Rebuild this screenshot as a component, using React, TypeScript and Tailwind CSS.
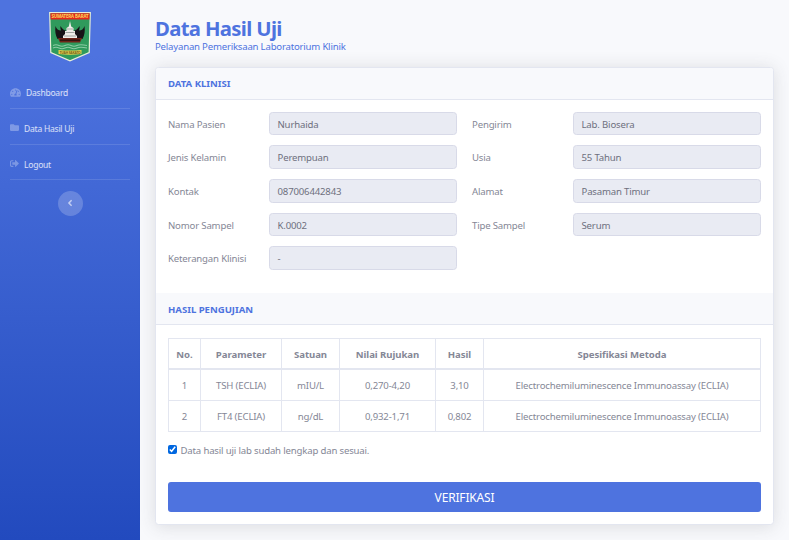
import type { ReactNode } from "react";
import { FaAngleLeft, FaFolder, FaSignOutAlt, FaTachometerAlt } from "react-icons/fa";

function Crest() {
  return (
    <svg className="overflow-visible" width="42" height="50" viewBox="0 0 42 50">
      <path d="M.7 .7H41.3L40.2 40.5L21 48.8L1.8 40.5Z" fill="#2f9a5c" stroke="#e9efd9" strokeWidth="1.2" />
      <path d="M1.4 1.3H40.6L40.4 7.5H1.6Z" fill="#e5251c" />
      <text x="21" y="6.3" textAnchor="middle" textLength="37" lengthAdjust="spacingAndGlyphs" fontSize="5" fontWeight="700" fill="#f7d95c">SUMATERA BARAT</text>
      <path d="M6.5 14Q8 18.5 12 18.5Q11 16 11.5 14Q14 18.5 18 19H24Q28 18.5 30.5 14Q31 16 30 18.5Q34 18.5 35.5 14Q36.5 22 33.5 27H8.5Q5.5 22 6.5 14Z" fill="#171317" />
      <path d="M21 9L22.2 14.5L24.5 16V19H26V22L28 24V26H14V24L16 22V19H17.5V16L19.8 14.5Z" fill="#f0eeea" />
      <path d="M18 17H24M16.5 20.5H25.5M15 24H27" stroke="#8f9290" strokeWidth=".8" />
      <path d="M9 26H33L31 30.5H11Z" fill="#6e2419" />
      <path d="M11 28.2H31" stroke="#291411" strokeWidth="1.3" />
      <path d="M4 33.5Q7 32 10 33.5T16 33.5T22 33.5T28 33.5T38 33.5M4 36Q7 34.5 10 36T16 36T22 36T28 36T38 36" fill="none" stroke="#8bcaa3" strokeWidth="1.2" />
      <path d="M9.5 38Q21 39 32.5 38V42Q21 43.5 9.5 42Z" fill="#ead04a" />
      <text x="21" y="42" textAnchor="middle" textLength="21" lengthAdjust="spacingAndGlyphs" fontSize="3.8" fontWeight="700" fill="#6d5e1f">TUAH SAKATO</text>
    </svg>
  );
}

function NavItem({ icon, children }: { icon: ReactNode; children: ReactNode }) {
  return (
    <div className="mx-[10px] flex h-[35.8px] items-center border-b border-white/12 pt-[5px] text-[8.5px] tracking-[-0.22px] text-white/80">
      <span className="-mt-[1.5px] text-white/30">{icon}</span>
      {children}
    </div>
  );
}

function Field({ label, value }: { label: string; value: string }) {
  return (
    <div className="flex h-[23.6px] items-center">
      <span className="w-[101px] pt-[1.5px] whitespace-nowrap text-[#858796]">{label}</span>
      <span className="flex h-[23.6px] w-[188px] items-center rounded-[3.5px] border border-[#d8dae8] bg-[#e9ebf3] px-[7.5px] pt-[1.5px] text-[#6e707e]">
        {value}
      </span>
    </div>
  );
}

function SectionHeader({ children }: { children: ReactNode }) {
  return (
    <h2 className="flex h-[32px] items-center border-b border-[#e3e6f0] bg-[#f8f9fc] px-[12px] pt-[1.5px] font-bold tracking-[-0.03px] text-[#4e73df]">
      {children}
    </h2>
  );
}

const left = [
  ["Nama Pasien", "Nurhaida"],
  ["Jenis Kelamin", "Perempuan"],
  ["Kontak", "087006442843"],
  ["Nomor Sampel", "K.0002"],
  ["Keterangan Klinisi", "-"],
];
const right = [
  ["Pengirim", "Lab. Biosera"],
  ["Usia", "55 Tahun"],
  ["Alamat", "Pasaman Timur"],
  ["Tipe Sampel", "Serum"],
];
const rows = [
  ["1", "TSH (ECLIA)", "mIU/L", "0,270-4,20", "3,10", "Electrochemiluminescence Immunoassay (ECLIA)"],
  ["2", "FT4 (ECLIA)", "ng/dL", "0,932-1,71", "0,802", "Electrochemiluminescence Immunoassay (ECLIA)"],
];
const heads = ["No.", "Parameter", "Satuan", "Nilai Rujukan", "Hasil", "Spesifikasi Metoda"];

export default function App() {
  return (
    <div className="flex h-[540px] w-[789px] overflow-hidden bg-[#f8f9fc] font-['Noto_Sans',sans-serif] text-[9.6px] leading-[15px] tracking-[-0.17px]">
      <aside className="flex w-[140px] shrink-0 flex-col bg-linear-to-b from-[#4e73df] from-10% to-[#224abe]">
        <div className="flex h-[73px] justify-center pt-[12px]">
          <Crest />
        </div>
        <NavItem icon={<FaTachometerAlt className="mr-[5px] size-[11px]" />}>Dashboard</NavItem>
        <NavItem icon={<FaFolder className="mr-[5px] size-[9px]" />}>Data Hasil Uji</NavItem>
        <NavItem icon={<FaSignOutAlt className="mr-[5px] size-[9px]" />}>Logout</NavItem>
        <button className="mt-[10.5px] flex size-[25px] items-center justify-center self-center rounded-full bg-white/20 text-white/60">
          <FaAngleLeft className="size-[10px]" />
        </button>
      </aside>
      <main className="min-w-0 flex-1 pl-[15px] pt-[15px] text-[#4e73df]">
        <h1 className="h-[25px] text-[20.3px] leading-[27px] font-bold tracking-[-0.65px]">Data Hasil Uji</h1>
        <p className="h-[13px] leading-[13px] tracking-[-0.2px]">Pelayanan Pemeriksaan Laboratorium Klinik</p>
        <section className="mt-[13.6px] h-[458px] w-[619px] overflow-hidden rounded-[3.5px] border border-[#e3e6f0] bg-white shadow-[0_1.5px_17.5px_rgba(58,59,69,0.15)]">
          <SectionHeader>DATA KLINISI</SectionHeader>
          <div className="flex h-[193.5px] gap-[15px] px-[12px] pt-[12px]">
            <div className="flex flex-col gap-[10.1px]">
              {left.map(([l, v]) => <Field key={l} label={l} value={v} />)}
            </div>
            <div className="flex flex-col gap-[10.1px]">
              {right.map(([l, v]) => <Field key={l} label={l} value={v} />)}
            </div>
          </div>
          <SectionHeader>HASIL PENGUJIAN</SectionHeader>
          <div className="px-[12px] pt-[12.5px] text-[#858796]">
            <table className="w-[593px] table-fixed border-collapse text-center">
              <colgroup>
                <col className="w-[32px]" /><col className="w-[81px]" /><col className="w-[58px]" />
                <col className="w-[96px]" /><col className="w-[48px]" /><col />
              </colgroup>
              <thead>
                <tr className="h-[31px]">
                  {heads.map((h) => <th key={h} className="border border-b-2 border-[#e3e6f0] p-0 pt-[2px] font-bold tracking-[-0.06px]">{h}</th>)}
                </tr>
              </thead>
              <tbody>
                {rows.map((r) => (
                  <tr key={r[0]} className="h-[31px]">
                    {r.map((c, i) => <td key={i} className="border border-[#e3e6f0] p-0 pt-[2px]">{c}</td>)}
                  </tr>
                ))}
              </tbody>
            </table>
            <label className="mt-[11px] flex h-[15px] items-center gap-[3.5px]">
              <input type="checkbox" defaultChecked className="-mt-px size-[9px] accent-[#0067e0]" />
              Data hasil uji lab sudah lengkap dan sesuai.
            </label>
            <button className="mt-[24px] flex h-[30px] w-[593px] items-center justify-center rounded-[3px] bg-[#4e73df] pt-[2px] text-[12px] tracking-[-0.17px] text-white">
              VERIFIKASI
            </button>
          </div>
        </section>
      </main>
    </div>
  );
}
